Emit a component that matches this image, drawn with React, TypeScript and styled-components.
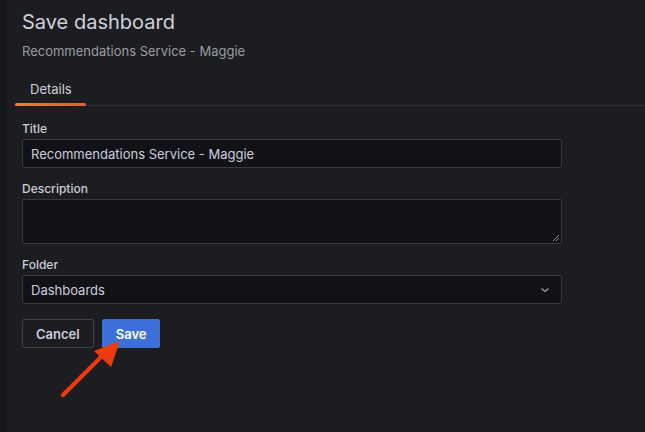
import styled, { createGlobalStyle } from "styled-components";

const GlobalStyle = createGlobalStyle`
  html, body {
    margin: 0;
    padding: 0;
    background: #1b1c1f;
  }
  body {
    font-family: Inter, "Liberation Sans", sans-serif;
    color: #ccccdc;
  }
`;

const Page = styled.div`
  width: 645px;
  height: 432px;
  display: flex;
  overflow: hidden;
  position: relative;
  background: #1c1d20;
`;

const EdgeStrip = styled.div`
  width: 7px;
  flex-shrink: 0;
  background: #17181b;
`;

const Drawer = styled.div`
  flex: 1;
  padding: 9px 0 0 8px;
  display: flex;
  flex-direction: column;
`;

const Header = styled.div`
  padding-left: 7px;
`;

const Heading = styled.h1`
  margin: 0;
  font-size: 20px;
  font-weight: 400;
  line-height: 26px;
  color: #d0d0dc;
`;

const SubTitle = styled.div`
  margin-top: 8px;
  font-size: 13px;
  line-height: 16px;
  color: #9a9ba3;
`;

const TabBar = styled.div`
  margin-top: 16px;
  display: flex;
  border-bottom: 1px solid #2e2f33;
`;

const Tab = styled.div<{ $active?: boolean }>`
  padding: 6px 14px 8px 15px;
  font-size: 13px;
  line-height: 16px;
  color: #d0d0dc;
  position: relative;
  &::after {
    content: "";
    display: ${(p) => (p.$active ? "block" : "none")};
    position: absolute;
    left: 0;
    right: 0;
    bottom: -1px;
    height: 3px;
    border-radius: 2px;
    background: linear-gradient(90deg, #f47b35, #e55a30);
  }
`;

const Form = styled.div`
  padding: 16px 0 0 7px;
  width: 540px;
  display: flex;
  flex-direction: column;
`;

const Field = styled.div`
  display: flex;
  flex-direction: column;
  margin-bottom: 14px;
`;

const Label = styled.label`
  font-size: 12px;
  font-weight: 500;
  line-height: 14px;
  color: #ccccdc;
  margin-bottom: 3px;
`;

const InputBox = styled.div<{ $height: number }>`
  height: ${(p) => p.$height}px;
  box-sizing: border-box;
  border: 1px solid #393a3f;
  border-radius: 2px;
  background: #111217;
  display: flex;
  align-items: center;
  padding: 0 8px;
  font-size: 13px;
  color: #ccccdc;
  position: relative;
`;

const Grip = styled.svg`
  position: absolute;
  right: 1px;
  bottom: 1px;
`;

const Chevron = styled.svg`
  margin-left: auto;
  margin-right: 3px;
`;

const Buttons = styled.div`
  display: flex;
  gap: 8px;
  margin-top: 1px;
`;

const Button = styled.button<{ $primary?: boolean }>`
  height: 29px;
  padding: 0 13px;
  font-family: Inter, "Liberation Sans", sans-serif;
  font-size: 13px;
  font-weight: 600;
  border-radius: 2px;
  cursor: pointer;
  border: 1px solid ${(p) => (p.$primary ? "#3d71d9" : "#414248")};
  background: ${(p) => (p.$primary ? "#3d71d9" : "transparent")};
  color: ${(p) => (p.$primary ? "#ffffff" : "#ccccdc")};
`;

const Arrow = styled.svg`
  position: absolute;
  left: 0;
  top: 0;
  pointer-events: none;
`;

export default function App() {
  return (
    <>
      <GlobalStyle />
      <Page>
        <EdgeStrip />
        <Drawer>
          <Header>
            <Heading>Save dashboard</Heading>
            <SubTitle>Recommendations Service - Maggie</SubTitle>
          </Header>
          <TabBar>
            <Tab $active>Details</Tab>
          </TabBar>
          <Form>
            <Field>
              <Label>Title</Label>
              <InputBox $height={29}>Recommendations Service - Maggie</InputBox>
            </Field>
            <Field>
              <Label>Description</Label>
              <InputBox $height={45}>
                <Grip width="8" height="8" viewBox="0 0 8 8">
                  <path d="M7 1 L1 7 M7 4 L4 7" stroke="#8e8e93" strokeWidth="1" />
                </Grip>
              </InputBox>
            </Field>
            <Field>
              <Label>Folder</Label>
              <InputBox $height={29}>
                Dashboards
                <Chevron width="10" height="6" viewBox="0 0 10 6">
                  <path d="M1.5 1.5 L5 4.5 L8.5 1.5" stroke="#a0a0aa" strokeWidth="1.3" fill="none" />
                </Chevron>
              </InputBox>
            </Field>
            <Buttons>
              <Button>Cancel</Button>
              <Button $primary>Save</Button>
            </Buttons>
          </Form>
        </Drawer>
        <Arrow width="645" height="432" viewBox="0 0 645 432">
          <line x1="63" y1="395" x2="102" y2="356" stroke="#ee3b0e" strokeWidth="4" strokeLinecap="round" />
          <polygon points="120,341 94,351 111,367" fill="#ee3b0e" />
        </Arrow>
      </Page>
    </>
  );
}
